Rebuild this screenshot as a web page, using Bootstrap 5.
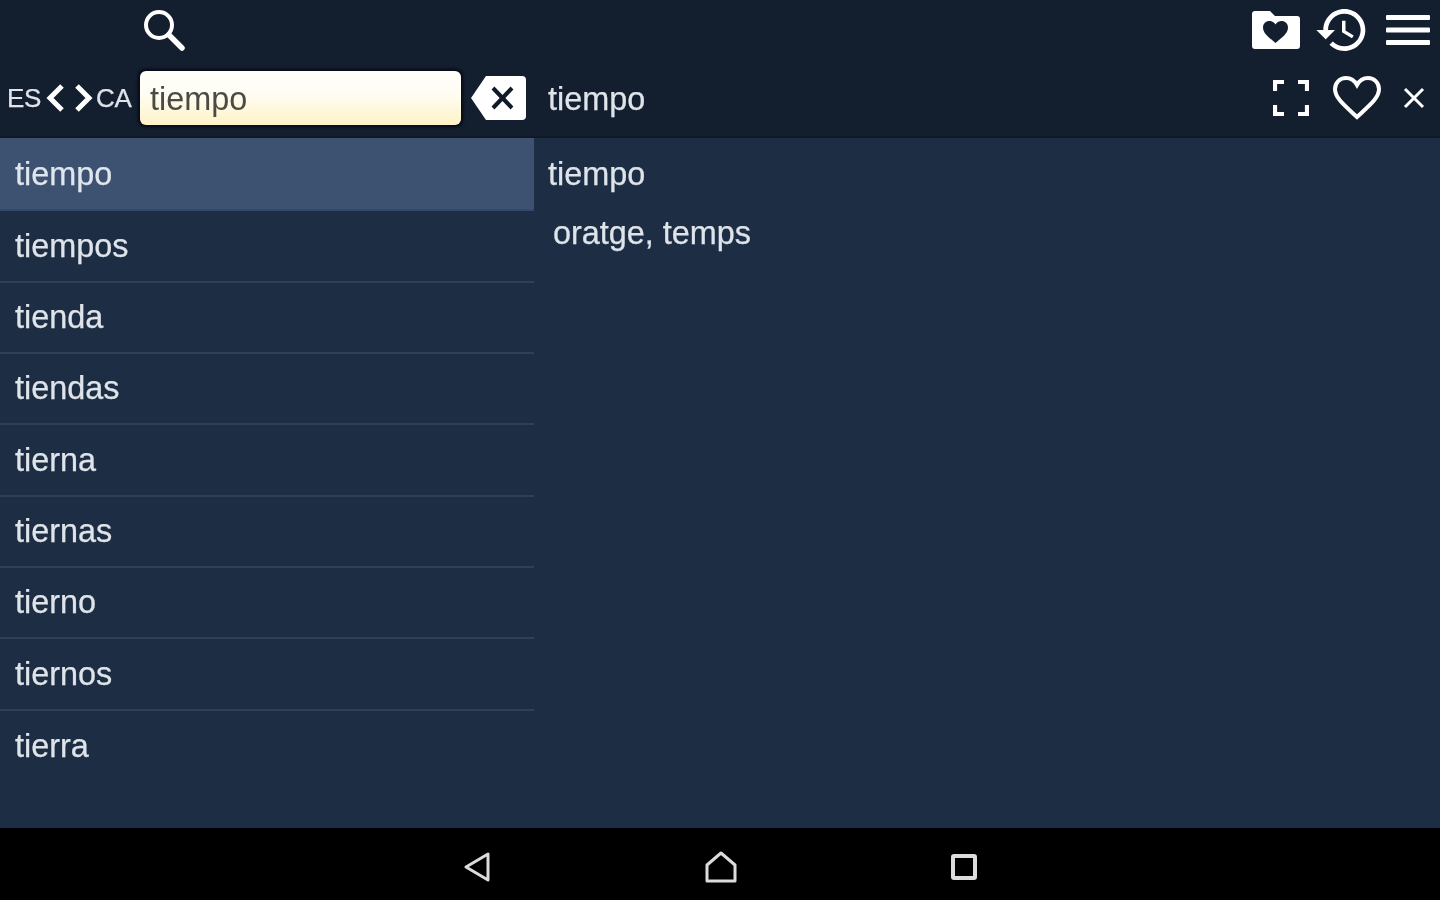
<!DOCTYPE html>
<html lang="es">
<head>
<meta charset="utf-8">
<title>Diccionari ES-CA</title>
<link href="https://cdn.jsdelivr.net/npm/bootstrap@5.3.0/dist/css/bootstrap.min.css" rel="stylesheet">
<style>
html,body{height:100%;margin:0;overflow:hidden}
body{background:#000;font-family:"Liberation Sans",Arial,sans-serif;color:#dfe4ea}
.shell{width:1440px;height:900px}
.dict-head{height:138px;background:#131e2f;border-bottom:2px solid #101926;flex:none}
.head-top{height:60px;padding-left:141px;padding-right:10px}
.head-bottom{height:76px}
.head-left{width:534px;padding-left:7px;flex:none}
.lang{font-size:26px;line-height:1;letter-spacing:-.4px;width:33px;-webkit-text-stroke:.25px currentColor}
.lang-ca{width:37px}
.search-box.form-control{width:321px;height:54px;flex:none;margin-left:7px;padding:3px 10px 0;border:0;border-radius:6px;font-size:32.4px;color:#4b4b45;background:linear-gradient(#fffefb 0%,#fffdf2 45%,#fff2c6 100%);box-shadow:0 0 3px 2px #050a16;filter:blur(.4px)}
.search-box.form-control:focus{color:#4b4b45;background:linear-gradient(#fffefb 0%,#fffdf2 45%,#fff2c6 100%);box-shadow:0 0 3px 2px #050a16}
.head-right{padding-left:14px;padding-right:15px}
.term{font-size:32.4px;line-height:1;padding-top:2px;-webkit-text-stroke:.25px currentColor}
.dict-main{height:690px;background:#1d2d43;flex:none}
.word-pane{width:534px;flex:none}
.word-list{padding-top:2px}
.word-list .list-group-item{height:71.35px;padding:0 0 .4px 15px;background:#1d2d43;color:#dfe4ea;font-size:32.4px;line-height:1;border:0;border-bottom:2px solid #2f415a;display:flex;align-items:center;-webkit-text-stroke:.25px currentColor}
.word-list .list-group-item.active{background:#3d5170;color:#dfe6ee;border-bottom-color:#34486a;height:73.35px;margin-top:-2px;padding:2px 0 0 15px}
.entry-pane{padding:17px 0 0 14px}
.entry-title{height:38px;display:flex;align-items:center;padding-top:0}
.entry-body{margin:24px 0 0 5px;font-size:32.4px;line-height:1;-webkit-text-stroke:.25px currentColor}
.sys-bar{height:72px;background:#000;padding:6px 0 0 463px;flex:none}
.soft{filter:blur(.55px)}
svg{display:block;flex:none}
</style>
</head>
<body>
<div class="shell d-flex flex-column">
  <header class="dict-head">
    <div class="head-top d-flex align-items-center justify-content-between">
      <svg class="soft" width="46" height="46" viewBox="0 0 46 46" fill="none" stroke="#fff" aria-label="Buscar"><circle cx="18" cy="18" r="13" stroke-width="4"/><path d="M28 28 41 41" stroke-width="5.500" stroke-linecap="round"/></svg>
      <div class="d-flex align-items-center">
        <svg class="soft" width="48" height="38" viewBox="0 0 48 38"><path d="M3 0h15l5 5h22a3 3 0 0 1 3 3v27a3 3 0 0 1-3 3H3a3 3 0 0 1-3-3V3a3 3 0 0 1 3-3z" fill="#fff"/><path d="M23.500 32C17 26.500 11 22.500 11 16.500 11 12.500 14 10 17.500 10c2.500 0 4.800 1.300 6 3.500 1.200-2.200 3.500-3.500 6-3.500 3.500 0 6.500 2.500 6.500 6.500 0 6-6 10-12.500 15.500z" fill="#131e2f"/></svg>
        <svg class="soft" width="56" height="56" viewBox="0 0 24 24" fill="#fff" style="margin-left:14px"><path d="M13 3c-4.970 0-9 4.030-9 9H1l3.890 3.890.07.14L9 12H6c0-3.870 3.130-7 7-7s7 3.130 7 7-3.130 7-7 7c-1.930 0-3.680-.79-4.940-2.060l-1.420 1.420C8.270 19.990 10.510 21 13 21c4.970 0 9-4.030 9-9s-4.030-9-9-9zm-1 5v5l4.280 2.540.72-1.210-3.500-2.080V8H12z"/></svg>
        <svg class="soft" width="44" height="30" viewBox="0 0 44 30" fill="#fff" style="margin-left:16px"><rect width="44" height="5" y="0" rx="1"/><rect width="44" height="5" y="12.500" rx="1"/><rect width="44" height="5" y="25" rx="1"/></svg>
      </div>
    </div>
    <div class="head-bottom d-flex">
      <div class="head-left d-flex align-items-center">
        <span class="lang soft">ES</span>
        <svg class="soft" width="19" height="30" viewBox="0 0 19 30" fill="none" stroke="#fff" stroke-width="5" style="margin-left:6px"><path d="M16 3 4 15l12 12"/></svg>
        <svg class="soft" width="19" height="30" viewBox="0 0 19 30" fill="none" stroke="#fff" stroke-width="5" style="margin-left:9px"><path d="M3 3l12 12L3 27"/></svg>
        <span class="lang lang-ca soft" style="margin-left:3px">CA</span>
        <input class="search-box form-control" type="text" value="tiempo" aria-label="Buscar">
        <svg class="soft" width="55" height="44" viewBox="0 0 55 44" style="margin-left:10px"><path d="M15 0h36a4 4 0 0 1 4 4v36a4 4 0 0 1-4 4H15L0 22z" fill="#fff"/><path d="M22 12l19 20M41 12 22 32" stroke="#111a28" stroke-width="4" fill="none"/></svg>
      </div>
      <div class="head-right flex-grow-1 d-flex align-items-center">
        <span class="term soft flex-grow-1">tiempo</span>
        <svg class="soft" width="36" height="36" viewBox="0 0 36 36" fill="none" stroke="#fff" stroke-width="4.200"><path d="M2 11V2h9M25 2h9v9M34 25v9h-9M11 34H2v-9"/></svg>
        <svg class="soft" width="48" height="44" viewBox="0 0 48 44" fill="none" stroke="#fff" stroke-width="4" style="margin-left:24px"><path d="M24 41C11 29 2 22 2 13 2 6.500 7 2 13 2c4.500 0 8.500 2.500 11 7 2.500-4.500 6.500-7 11-7 6 0 11 4.500 11 11 0 9-9 16-22 28z"/></svg>
        <svg class="soft" width="22" height="22" viewBox="0 0 22 22" fill="none" stroke="#fff" stroke-width="3" style="margin-left:22px"><path d="M2 2l18 18M20 2 2 20"/></svg>
      </div>
    </div>
  </header>
  <main class="dict-main d-flex">
    <div class="word-pane">
      <ul class="word-list list-group list-group-flush">
        <li class="list-group-item active"><span class="soft">tiempo</span></li>
        <li class="list-group-item"><span class="soft">tiempos</span></li>
        <li class="list-group-item"><span class="soft">tienda</span></li>
        <li class="list-group-item"><span class="soft">tiendas</span></li>
        <li class="list-group-item"><span class="soft">tierna</span></li>
        <li class="list-group-item"><span class="soft">tiernas</span></li>
        <li class="list-group-item"><span class="soft">tierno</span></li>
        <li class="list-group-item"><span class="soft">tiernos</span></li>
        <li class="list-group-item"><span class="soft">tierra</span></li>
      </ul>
    </div>
    <div class="entry-pane flex-grow-1">
      <div class="entry-title term soft">tiempo</div>
      <div class="entry-body soft">oratge, temps</div>
    </div>
  </main>
  <footer class="sys-bar d-flex align-items-center">
    <svg class="soft" width="28" height="32" viewBox="0 0 28 32" fill="none" stroke="#dcdcdc" stroke-width="3" stroke-linejoin="round"><path d="M3 16 25 3v26z"/></svg>
    <svg class="soft" width="32" height="32" viewBox="0 0 32 32" fill="none" stroke="#dcdcdc" stroke-width="3" stroke-linejoin="round" style="margin-left:214px"><path d="M2 14 16 2l14 12v16H2z"/></svg>
    <svg class="soft" width="26" height="26" viewBox="0 0 26 26" fill="none" stroke="#dcdcdc" stroke-width="4" style="margin-left:214px"><rect x="2" y="2" width="22" height="22" rx="1"/></svg>
  </footer>
</div>
</body>
</html>
